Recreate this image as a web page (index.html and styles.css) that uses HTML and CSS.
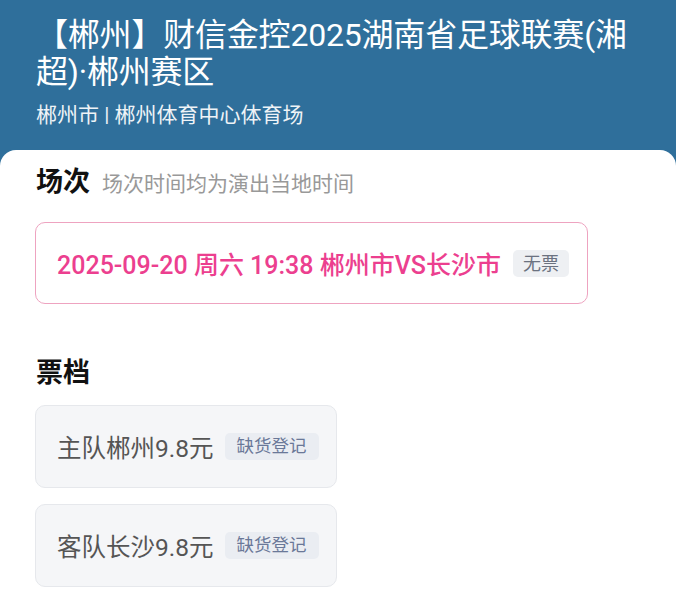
FILE: index.html
```html
<!DOCTYPE html>
<html lang="zh-CN">
<head>
  <meta charset="UTF-8">
  <meta name="viewport" content="width=device-width, initial-scale=1.0">
  <title>郴州赛区</title>
  <link rel="stylesheet" href="styles.css">
</head>
<body>
  <div class="header">
    <h1 class="title">【郴州】财信金控2025湖南省足球联赛(湘超)·郴州赛区</h1>
    <div class="venue">郴州市 | 郴州体育中心体育场</div>
  </div>
  <div class="panel">
    <div class="section-head">
      <h2>场次</h2>
      <span class="hint">场次时间均为演出当地时间</span>
    </div>
    <div class="session">
      <span class="session-text">2025-09-20 周六 19:38 郴州市VS长沙市</span>
      <span class="tag">无票</span>
    </div>

    <div class="section-head tickets-head">
      <h2>票档</h2>
    </div>
    <div class="ticket">
      <span class="ticket-name">主队郴州9.8元</span>
      <span class="tag tag-blue">缺货登记</span>
    </div>
    <div class="ticket">
      <span class="ticket-name">客队长沙9.8元</span>
      <span class="tag tag-blue">缺货登记</span>
    </div>
  </div>
</body>
</html>
```

FILE: styles.css
```css
body {
  font-family: Roboto, 'Noto Sans CJK SC', sans-serif;
  background-color: #2f6f9b;
  margin: 0;
  height: 602px;
  overflow: hidden;
}

.header {
  padding: 17px 36px 0 36px;
  height: 133px;
  color: #fff;
}

.title {
  margin: 0;
  font-size: 32px;
  font-weight: 400;
  line-height: 37px;
  letter-spacing: -0.2px;
}

.venue {
  margin-top: 10px;
  font-size: 21px;
  line-height: 28px;
  opacity: 0.92;
}

.panel {
  background-color: #fff;
  border-radius: 16px 16px 0 0;
  padding: 14px 36px 0 35px;
  min-height: 440px;
}

.section-head {
  display: flex;
  align-items: baseline;
  gap: 12px;
  padding-left: 1px;
}

.section-head h2 {
  margin: 0;
  font-size: 27px;
  font-weight: 700;
  line-height: 36px;
  color: #111;
}

.hint {
  font-size: 21px;
  color: #999;
}

.session {
  margin-top: 22px;
  width: 553px;
  height: 82px;
  border: 1px solid #eea3c0;
  border-radius: 10px;
  display: flex;
  align-items: center;
  padding-left: 21px;
  box-sizing: border-box;
}

.session-text {
  font-size: 25px;
  font-weight: 500;
  color: #ec3f8f;
}

.tag {
  margin-left: 12px;
  background-color: #eef0f3;
  color: #6b7280;
  font-size: 18px;
  line-height: 27px;
  padding: 0 10px;
  border-radius: 5px;
}

.tickets-head {
  margin-top: 51px;
}

.ticket {
  margin-top: 14px;
  width: 302px;
  height: 83px;
  box-sizing: border-box;
  background-color: #f5f6f8;
  border: 1px solid #e6e8ec;
  border-radius: 10px;
  display: flex;
  align-items: center;
  padding-left: 21px;
}

.ticket + .ticket {
  margin-top: 16px;
}

.ticket-name {
  font-size: 24.5px;
  color: #555;
}

.tag-blue {
  margin-left: 11px;
  background-color: #eaedf2;
  color: #6a7898;
  font-size: 17.5px;
  padding: 0 12px;
}
```
